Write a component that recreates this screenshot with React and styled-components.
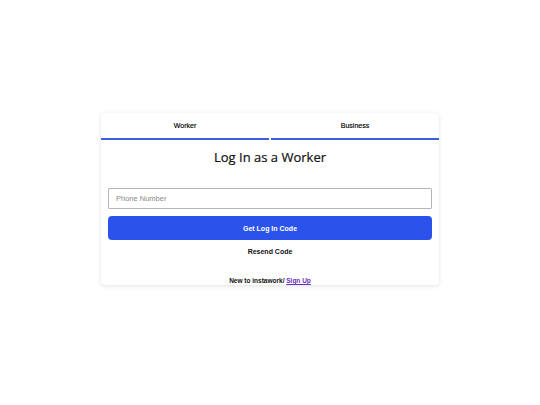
import * as React from 'react';
import styled, {createGlobalStyle} from 'styled-components';

const GlobalStyle = createGlobalStyle`
  html, body {
    margin: 0;
    padding: 0;
    background: #ffffff;
  }
  body {
    font-family: "Liberation Sans", Arial, sans-serif;
  }
`;

const Page = styled.div`
  width: 540px;
  height: 405px;
  padding-top: 113px;
  box-sizing: border-box;
`;

const Card = styled.div`
  width: 338px;
  margin: 0 auto;
  background: #fff;
  border-radius: 4px;
  box-shadow: 0 1px 4px rgba(0, 0, 0, 0.12);
  display: flex;
  flex-direction: column;
`;

const Tabs = styled.div`
  display: flex;
  gap: 2px;
`;

const Tab = styled.div`
  flex: 1;
  height: 25px;
  display: flex;
  align-items: center;
  justify-content: center;
  font-size: 7px;
  color: #000;
  -webkit-text-stroke: 0.15px #000;
  border-bottom: 2px solid ${props => props.active ? '#3d5fe0' : 'transparent'};
  cursor: pointer;
`;

const Title = styled.h1`
  margin: 8px 0 0;
  text-align: center;
  font-family: "Open Sans", "DejaVu Sans", sans-serif;
  font-weight: 500;
  font-size: 13px;
  line-height: 18px;
  color: #111;
  -webkit-text-stroke: 0.2px #111;
`;

const Form = styled.div`
  display: flex;
  flex-direction: column;
  padding: 0 7px;
  margin-top: 22px;
`;

const Input = styled.input`
  height: 21px;
  box-sizing: border-box;
  border: 1px solid #b5b5b5;
  border-radius: 1px;
  padding: 0 7px;
  font-family: "Liberation Sans", Arial, sans-serif;
  font-size: 7.5px;
  outline: none;
  &::placeholder {
    color: #8a8a8a;
  }
`;

const Button = styled.button`
  margin-top: 7px;
  height: 24px;
  border: none;
  border-radius: 4px;
  background: #2b53ec;
  color: #fff;
  font-family: "Liberation Sans", Arial, sans-serif;
  font-weight: bold;
  font-size: 7px;
  cursor: pointer;
`;

const Resend = styled.div`
  margin-top: 7px;
  text-align: center;
  font-weight: bold;
  font-size: 7px;
  line-height: 9px;
  color: #111;
`;

const Footer = styled.div`
  margin-top: 21px;
  text-align: center;
  font-weight: bold;
  font-size: 6.5px;
  line-height: 8px;
  color: #111;
  a {
    color: #6a2fbf;
    text-decoration: underline;
  }
`;

export default function App() {
    const [tab, setTab] = React.useState('worker');
    return <Page>
        <GlobalStyle/>
        <Card>
            <Tabs>
                <Tab active={tab === 'worker'} onClick={() => setTab('worker')}>Worker</Tab>
                <Tab active onClick={() => setTab('business')}>Business</Tab>
            </Tabs>
            <Title>Log In as a Worker</Title>
            <Form>
                <Input placeholder="Phone Number"/>
                <Button>Get Log In Code</Button>
            </Form>
            <Resend>Resend Code</Resend>
            <Footer>New to instawork/ <a href="#">Sign Up</a></Footer>
        </Card>
    </Page>;
}
